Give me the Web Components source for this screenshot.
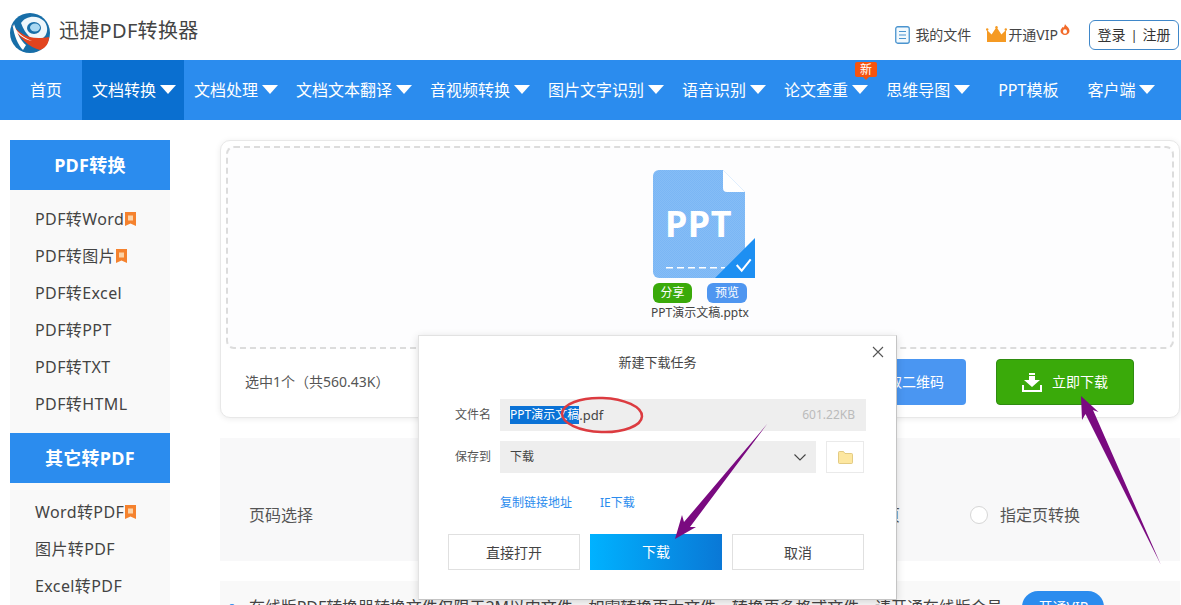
<!DOCTYPE html>
<html lang="zh-CN"><head><meta charset="utf-8"><title>迅捷PDF转换器</title>
<style>
html,body{margin:0;padding:0;background:#fff}
body{width:1181px;height:605px;overflow:hidden;position:relative;font-family:"Noto Sans","Noto Sans CJK SC",sans-serif;color:#444}
</style></head><body>
<x-topbar></x-topbar>
<x-nav>
  <x-nav-item style="--pl:30px;--pr:20px">首页</x-nav-item>
  <x-nav-item arrow active>文档转换</x-nav-item>
  <x-nav-item arrow>文档处理</x-nav-item>
  <x-nav-item arrow>文档文本翻译</x-nav-item>
  <x-nav-item arrow>音视频转换</x-nav-item>
  <x-nav-item arrow>图片文字识别</x-nav-item>
  <x-nav-item arrow>语音识别</x-nav-item>
  <x-nav-item arrow badge="新">论文查重</x-nav-item>
  <x-nav-item arrow>思维导图</x-nav-item>
  <x-nav-item style="--pl:20px;--pr:19px">PPT模板</x-nav-item>
  <x-nav-item arrow>客户端</x-nav-item>
</x-nav>
<x-layout>
  <x-sidebar slot="side">
    <x-side-group title="PDF转换">
      <x-side-item tag>PDF转Word</x-side-item>
      <x-side-item tag>PDF转图片</x-side-item>
      <x-side-item>PDF转Excel</x-side-item>
      <x-side-item>PDF转PPT</x-side-item>
      <x-side-item>PDF转TXT</x-side-item>
      <x-side-item>PDF转HTML</x-side-item>
    </x-side-group>
    <x-side-group title="其它转PDF">
      <x-side-item tag>Word转PDF</x-side-item>
      <x-side-item>图片转PDF</x-side-item>
      <x-side-item>Excel转PDF</x-side-item>
    </x-side-group>
  </x-sidebar>
  <x-upload-card></x-upload-card>
  <x-range></x-range>
  <x-notice></x-notice>
</x-layout>
<x-dialog></x-dialog>
<x-annotations></x-annotations>
<script>
function def(name, css, html, init){
  customElements.define(name, class extends HTMLElement{
    constructor(){super();const r=this.attachShadow({mode:'open'});
      r.innerHTML='<style>'+css+'</style>'+html;}
    connectedCallback(){ if(init) init(this,this.shadowRoot); }
  });
}
def('x-topbar',`
:host{display:flex;align-items:center;height:60px;padding:0 2px 0 10px;box-sizing:border-box;width:1181px}
svg{display:block;flex:none}
.logo{margin-top:6px}
.t{font-size:20px;line-height:28px;color:#444;margin-left:9px;margin-top:2px;letter-spacing:.3px}
.sp{flex:1}
.f{font-size:14px;line-height:18px;color:#444;margin-left:5px;white-space:nowrap}
.login{display:flex;align-items:center;justify-content:center;box-sizing:border-box;width:90px;height:30px;border:1px solid #3f87c9;border-radius:6px;font-size:14px;line-height:18px;color:#333;margin-left:19px;gap:5px}
.r{display:flex;align-items:center;margin-top:9px}
.sep{font-size:13px}
`,`
<svg class="logo" width="40" height="40" viewBox="0 0 40 40">
 <circle cx="20" cy="20" r="20" fill="#176ea8"/>
 <path d="M11 10C15 3 27 1 34 8C40 15 37 26 28 27C22 27 16 23 11 10Z" fill="#eef7fc"/>
 <ellipse cx="24" cy="15" rx="7" ry="6" fill="#176ea8"/>
 <ellipse cx="25" cy="14.5" rx="5" ry="4" fill="#a9d8f2"/>
 <path d="M2 12C10 20 18 28 39 24C39 30 36 35 30 37C20 35 8 24 2 12Z" fill="#e2431e"/>
 <path d="M4 11C8 22 11 28 16 32L13 37C8 32 4 22 3 14Z" fill="#fff"/>
 <path d="M2 12C8 20 14 25 22 28C14 27 6 20 2 12Z" fill="#fff"/>
</svg>
<span class="t">迅捷PDF转换器</span>
<span class="sp"></span>
<span class="r">
<svg width="15" height="18" viewBox="0 0 15 18"><rect x=".75" y=".75" width="13.5" height="16.5" rx="2" fill="#f2f9fd" stroke="#4a94cf" stroke-width="1.3"/><path d="M4 5.5h7M4 9h7M4 12.5h7" stroke="#4a94cf" stroke-width="1.2"/></svg>
<span class="f">我的文件</span>
<svg style="margin-left:15px" width="21" height="17" viewBox="0 0 21 17"><path d="M1 16V4l4.6 4.5L10.500 1l4.900 7.500L20 4v12z" fill="#f59a23"/><circle cx="1.200" cy="3.500" r="1.200" fill="#f59a23"/><circle cx="10.500" cy="1.200" r="1.200" fill="#f59a23"/><circle cx="19.800" cy="3.500" r="1.200" fill="#f59a23"/></svg>
<span class="f" style="margin-left:1px">开通VIP</span>
<svg style="margin:-10px 0 0 2px" width="10" height="11" viewBox="0 0 10 11"><path d="M5 0C6 2 9.500 3.500 9.500 7A4.500 4 0 0 1 .5 7C.5 5 2 4.500 2.500 3C3.500 3.500 4 3.500 4 3C4.500 2 4.800 1 5 0Z" fill="#f26b2a"/><ellipse cx="5" cy="7.500" rx="2" ry="2.200" fill="#fff"/></svg>
<span class="login"><span>登录</span><span class="sep">|</span><span>注册</span></span>
</span>
`);
def('x-nav',`:host{display:flex;height:60px;background:#2b8cee;width:1181px}`,`<slot></slot>`);
def('x-nav-item',`
:host{display:flex;align-items:center;height:60px;box-sizing:border-box;padding:0 var(--pr,8px) 0 var(--pl,10px);color:#fff;font-size:16px;line-height:22px;white-space:nowrap;position:relative;flex:none}
:host([active]){background:#0a6fd0}
.a{display:none;width:0;height:0;margin-left:4px;border-left:8px solid transparent;border-right:8px solid transparent;border-top:9px solid #fff;margin-top:-1px}
:host([arrow]) .a{display:block}
.b{display:none;position:absolute;left:81px;top:2px;width:22px;height:15px;background:#f5540f;border-radius:2px;color:#fff;font-size:12px;line-height:15px;text-align:center}
.b::after{content:"";position:absolute;left:8px;top:15px;border:3px solid transparent;border-top:3px solid #f5540f}
`,`<slot></slot><span class="a"></span><span class="b"></span>`,(h,r)=>{
  const b=h.getAttribute('badge'); if(b){const e=r.querySelector('.b');e.textContent=b;e.style.display='block';}
});
def('x-layout',`
:host{display:flex;width:1181px;padding-top:20px;box-sizing:border-box}
.s{flex:none;width:160px;margin:0 50px 0 10px}
.m{flex:none;width:960px;display:flex;flex-direction:column}
`,`<div class="s"><slot name="side"></slot></div><div class="m"><slot></slot></div>`);
def('x-sidebar',`:host{display:block}`,`<slot></slot>`);
def('x-side-group',`
:host{display:block;background:#f9f9f9}
.h{height:50px;background:#2b8cee;color:#fff;font-size:18px;font-weight:700;line-height:50px;text-align:center;letter-spacing:.3px}
.l{padding:10px 0 10.400px}
`,`<div class="h"></div><div class="l"><slot></slot></div>`,(h,r)=>{r.querySelector('.h').textContent=h.getAttribute('title');});
def('x-side-item',`
:host{display:flex;align-items:center;height:37.100px;padding-left:25px;font-size:16px;line-height:22px;color:#444;white-space:nowrap;letter-spacing:.4px}
svg{display:none;margin-left:1px;flex:none}
:host([tag]) svg{display:block}
`,`<slot></slot><svg width="11" height="14" viewBox="0 0 11 14"><path d="M0 0h11v14L5.500 11.500 0 14z" fill="#f5822e"/><rect x="3" y="3.500" width="5" height="5" fill="#fbd3a8"/></svg>`);
def('x-file-icon',`
:host{display:block;width:102px;height:108px;margin-left:8px}
svg{display:block}
text{font-family:"Noto Sans","Noto Sans CJK SC",sans-serif;font-weight:700;font-size:36px;fill:#fff;letter-spacing:.5px}
`,`<svg width="102" height="108" viewBox="0 0 102 108">
<defs><pattern id="d" width="2" height="2" patternUnits="userSpaceOnUse"><rect width="2" height="2" fill="#7ab6f5"/><rect width="1" height="1" fill="#86bdf6"/><rect x="1" y="1" width="1" height="1" fill="#86bdf6"/></pattern></defs>
<path d="M6 0H70L92 22V108H6A6 6 0 0 1 0 102V6A6 6 0 0 1 6 0Z" fill="url(#d)"/>
<path d="M70 0L92 22H74A4 4 0 0 1 70 18Z" fill="#fff"/>
<text x="12" y="67">PPT</text>
<path d="M13 97.700H72" stroke="#fff" stroke-width="1.500" stroke-dasharray="7 4"/>
<path d="M102 68V108H62Z" fill="#1d8ff2"/>
<path d="M83.700 95L88.700 100.700L97.700 89.300" fill="none" stroke="#fff" stroke-width="2"/>
</svg>`);
def('x-upload-card',`
:host{display:block;box-sizing:border-box;width:960px;height:278px;border:1px solid #e8e8e8;border-radius:10px;box-shadow:0 1px 6px rgba(0,0,0,.08);background:#fff;padding:5px;font-size:12px}
.drop{box-sizing:border-box;height:203px;border:2px dashed #dcdcdc;border-radius:8px;background:#fdfdfe;display:flex;flex-direction:column;align-items:center;padding-top:22px}
.acts{display:flex;justify-content:space-between;width:94px;margin-top:5px}
.tag{display:block;width:39px;height:20px;border-radius:6px;color:#fff;font-size:12px;line-height:20px;text-align:center;background:#3aaa0a}
.tag.b{background:#4f96f0;width:40px}
.nm{font-size:12px;line-height:18px;margin-top:1px;color:#444;text-align:center;white-space:nowrap}
.foot{display:flex;align-items:center;height:69px;padding:0 0 2px 19px;box-sizing:border-box;font-size:14px;line-height:18px;color:#555}
.foot>span:first-child{margin-top:-2px}
.sp{flex:1}
.btn{box-sizing:border-box;display:flex;align-items:center;justify-content:center;gap:10px;width:138px;height:46px;border-radius:4px;color:#fff;font-size:14px;line-height:18px;margin-top:-1px}
.btn.q{background:#4a96f2;margin-right:30px;padding-left:24px}
.btn.g{background:#3aaa0a;border:1px solid #2f8c10;margin-right:40px}
svg{display:block}
`,`
<div class="drop">
  <x-file-icon></x-file-icon>
  <div class="acts"><span class="tag">分享</span><span class="tag b">预览</span></div>
  <div class="nm">PPT演示文稿.pptx</div>
</div>
<div class="foot"><span>选中1个（共560.43K）</span><span class="sp"></span>
<span class="btn q">获取二维码</span>
<span class="btn g"><svg width="20" height="19" viewBox="0 0 20 19"><path d="M7 0h6v2H7zM7 3h6v4h5L10 14 2 7h5z" fill="#fff"/><path d="M1 12v6h18v-6" fill="none" stroke="#fff" stroke-width="2"/></svg>立即下载</span></div>
`);
def('x-range',`
:host{display:flex;align-items:center;box-sizing:border-box;width:960px;height:123px;margin-top:20px;background:#f8f8f9;padding:30px 100px 0 29px;font-size:16px;line-height:22px;color:#555;white-space:nowrap}
.sp{flex:1}
.o{display:flex;align-items:center;gap:12px}
.o i{display:block;box-sizing:border-box;width:18px;height:18px;border-radius:50%;border:1px solid #d6d6d6;background:#fff}
`,`<span>页码选择</span><span class="sp"></span>
<span class="o" style="margin-right:70px"><i></i>转换全部页</span>
<span class="o"><i></i>指定页转换</span>`);
def('x-notice',`
:host{display:flex;align-items:center;box-sizing:border-box;width:960px;height:52px;margin-top:20px;background:#f9f9f9;padding:0 0 0 9px;font-size:16px;line-height:22px;color:#444;white-space:nowrap}
i{display:block;width:6px;height:6px;border-radius:50%;background:#2b8cee;margin-right:14px}
span{letter-spacing:-.08px}
b{display:block;font-weight:400;width:82px;height:32px;line-height:32px;border-radius:16px;background:#2b8cee;color:#fff;text-align:center;font-size:14px;margin-left:20px}
`,`<i></i><span>在线版PDF转换器转换文件仅限于2M以内文件，如需转换更大文件，转换更多格式文件，请开通在线版会员</span><b>开通VIP</b>`);
def('x-dialog',`
:host{display:block;position:absolute;left:418px;top:335px;width:479px;height:265px;box-sizing:border-box;background:#fff;border:1px solid #c4c4c4;border-top-color:#e2e2e2;border-left-color:#e2e2e2;box-shadow:0 2px 8px rgba(0,0,0,.15);padding:0 32px 0 29px;color:#444;font-size:13px}
.t{position:relative;height:53px;line-height:52px;text-align:center;font-size:13px;margin:0 -31px 0 -28px;color:#444}
.x{position:absolute;right:11px;top:10px;display:block}
.row{display:flex;align-items:center;height:32px;margin-top:10px}
.lb{width:52px;padding-left:7px;box-sizing:border-box;font-size:12px;color:#555;line-height:18px;white-space:nowrap;flex:none}
.in{flex:1;height:32px;background:#eee;display:flex;align-items:center;padding:0 11px 0 10px;font-size:13px;line-height:18px;color:#444}
.sel{background:#0a72d6;color:#fff;font-size:12px}
.sp{flex:1}
.sz{color:#bbb;font-size:12px}
.fold{flex:none;box-sizing:border-box;width:38px;height:32px;border:1px solid #eaeaea;margin-left:10px;display:flex;align-items:center;justify-content:center}
.lk{display:flex;gap:28px;padding-left:52px;margin-top:21px;height:18px;line-height:18px;font-size:12px;color:#2b8cee}
.bs{display:flex;gap:10px;margin-top:22px}
.b{box-sizing:border-box;width:132px;height:36px;border:1px solid #e0e0e0;text-align:center;line-height:35px;font-size:14px;color:#444}
.b.p{border:0;line-height:36px;color:#fff;background:linear-gradient(90deg,#00b2ff,#0a78d6)}
svg{display:block}
`,`
<div class="t">新建下载任务<svg class="x" width="12" height="12" viewBox="0 0 12 12"><path d="M1 1l10 10M11 1L1 11" stroke="#555" stroke-width="1.100" fill="none"/></svg></div>
<div class="row" style="margin-top:10px;margin-right:-2px"><span class="lb">文件名</span><div class="in"><span class="sel">PPT演示文稿</span><span>.pdf</span><span class="sp"></span><span class="sz">601.22KB</span></div></div>
<div class="row"><span class="lb">保存到</span><div class="in" style="font-size:12px">下载<span class="sp"></span><svg width="12" height="7" viewBox="0 0 12 7" style="margin-right:-1px"><path d="M.5.500L6 6l5.500-5.500" fill="none" stroke="#444" stroke-width="1.100"/></svg></div>
<span class="fold"><svg width="15" height="13" viewBox="0 0 15 13"><path d="M.5 1.500a1 1 0 0 1 1-1h4l1.500 2h6.500a1 1 0 0 1 1 1v8a1 1 0 0 1-1 1h-12a1 1 0 0 1-1-1z" fill="#fde7a0" stroke="#dcc070" stroke-width=".8"/></svg></span></div>
<div class="lk"><span>复制链接地址</span><span>IE下载</span></div>
<div class="bs" style="margin-right:-2px"><span class="b">直接打开</span><span class="b p">下载</span><span class="b">取消</span></div>
`);
def('x-annotations',`
:host{display:block;position:absolute;left:0;top:0;width:1181px;height:605px;pointer-events:none}
svg{display:block}
`,`<svg width="1181" height="605" viewBox="0 0 1181 605">
<ellipse cx="602" cy="415" rx="40" ry="17" transform="rotate(2 602 415)" fill="none" stroke="#dc3b40" stroke-width="2.500"/>
<path d="M767.500 423.500L690 527L696 527L675 539L682 515L684 522Z" fill="#7a0a80"/>
<path d="M1161 565L1093 410L1098.500 412L1081 396L1082 420L1085.500 414Z" fill="#7a0a80"/>
</svg>`);
</script>
</body></html>
